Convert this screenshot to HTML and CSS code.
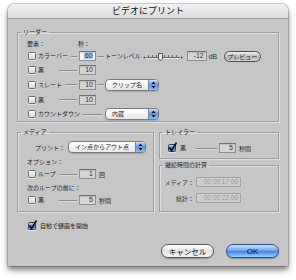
FILE: index.html
```html
<!DOCTYPE html>
<html lang="ja">
<head>
<meta charset="utf-8">
<title>ビデオにプリント</title>
<link rel="stylesheet" href="styles.css">
</head>
<body>
<div class="win">
  <div class="titlebar">ビデオにプリント</div>
  <div class="body">
    <fieldset class="grp leader">
      <legend>リーダー</legend>
      <div class="gb gb-leader">
        <div class="hdr"><span class="h1">要素：</span><span>秒：</span></div>
        <div class="row">
          <div class="lead"><span class="cb"></span><span class="lbl">カラーバー</span><span class="ln"></span></div>
          <span class="fld fld-sel"><span class="hl">60</span></span>
          <span class="ln conn"></span>
          <span class="lbl">トーンレベル</span>
          <svg class="slider" width="42" height="10" viewBox="0 0 42 10">
            <path d="M3 5.5 L1 6.5 L3 7.5 Z" fill="#333"/>
            <path d="M39 5.5 L41 6.5 L39 7.5 Z" fill="#333"/>
            <rect x="4" y="6" width="34" height="1" fill="#6a6a6a"/>
            <rect x="4" y="7" width="34" height="1" fill="#e6e6e6"/>
            <g fill="#6a6a6a">
              <rect x="6" y="4" width="1" height="2"/><rect x="10" y="4" width="1" height="2"/><rect x="14" y="4" width="1" height="2"/>
              <rect x="22" y="4" width="1" height="2"/><rect x="26" y="4" width="1" height="2"/><rect x="30" y="4" width="1" height="2"/><rect x="34" y="4" width="1" height="2"/>
            </g>
            <path d="M16.5 2.5 H20.5 V8 L18.5 9.5 L16.5 8 Z" fill="#eaeaea" stroke="#555" stroke-width="1"/>
          </svg>
          <span class="fld fld-db">-12</span>
          <span class="unit-db">dB</span>
          <span class="pill prev">プレビュー</span>
        </div>
        <div class="row">
          <div class="lead"><span class="cb"></span><span class="lbl">黒</span><span class="ln short"></span></div>
          <span class="fld">10</span>
        </div>
        <div class="row row-t">
          <div class="lead"><span class="cb"></span><span class="lbl">スレート</span><span class="ln"></span></div>
          <span class="fld">10</span>
          <span class="ln conn"></span>
          <span class="popup pop-s"><span class="ptxt">クリップ名</span><span class="arr"><svg width="9" height="10" viewBox="0 0 9 10"><path d="M2.5 4 L4.5 1.5 L6.5 4 Z M2.5 6 L4.5 8.5 L6.5 6 Z" fill="#111"/></svg></span></span>
        </div>
        <div class="row row-t">
          <div class="lead"><span class="cb"></span><span class="lbl">黒</span><span class="ln short"></span></div>
          <span class="fld">10</span>
        </div>
        <div class="row">
          <div class="lead lead-wide"><span class="cb"></span><span class="lbl">カウントダウン</span><span class="ln"></span></div>
          <span class="popup pop-s"><span class="ptxt">内蔵</span><span class="arr"><svg width="9" height="10" viewBox="0 0 9 10"><path d="M2.5 4 L4.5 1.5 L6.5 4 Z M2.5 6 L4.5 8.5 L6.5 6 Z" fill="#111"/></svg></span></span>
        </div>
      </div>
    </fieldset>

    <div class="lower">
      <fieldset class="grp media">
        <legend>メディア</legend>
        <div class="gb gb-media">
          <div class="prow">
            <span class="plbl">プリント：</span>
            <span class="popup pop-m"><span class="ptxt">イン点からアウト点</span><span class="arr"><svg width="9" height="10" viewBox="0 0 9 10"><path d="M2.5 4 L4.5 1.5 L6.5 4 Z M2.5 6 L4.5 8.5 L6.5 6 Z" fill="#111"/></svg></span></span>
          </div>
          <div class="sub sub-opt">オプション：</div>
          <div class="row">
            <div class="lead"><span class="cb"></span><span class="lbl">ループ</span><span class="ln short"></span></div>
            <span class="fld">1</span>
            <span class="unit">回</span>
          </div>
          <div class="sub sub-next">次のループの前に：</div>
          <div class="row">
            <div class="lead"><span class="cb"></span><span class="lbl">黒</span><span class="ln short"></span></div>
            <span class="fld">5</span>
            <span class="unit">秒間</span>
          </div>
        </div>
      </fieldset>

      <div class="rcol">
        <fieldset class="grp trailer">
          <legend>トレイラー</legend>
          <div class="gb gb-trailer">
            <div class="row">
              <div class="lead lead-tr"><span class="cb on"><svg width="8" height="8" viewBox="0 0 8 8"><path d="M1.5 3.5 L3.5 6.5 L8.5 -1.5" fill="none" stroke="#111" stroke-width="1.6"/></svg></span><span class="lbl">黒</span><span class="ln"></span></div>
              <span class="fld">5</span>
              <span class="unit">秒間</span>
            </div>
          </div>
        </fieldset>
        <fieldset class="grp duration">
          <legend>継続時間の計算</legend>
          <div class="gb gb-dur">
            <div class="drow"><span class="dlbl">メディア：</span><span class="tfld">00:00:17:00</span></div>
            <div class="drow"><span class="dlbl">総計：</span><span class="tfld">00:00:22:00</span></div>
          </div>
        </fieldset>
      </div>
    </div>

    <div class="auto">
      <span class="cb on"><svg width="8" height="8" viewBox="0 0 8 8"><path d="M1.5 3.5 L3.5 6.5 L8.5 -1.5" fill="none" stroke="#111" stroke-width="1.6"/></svg></span>
      <span class="lbl">自動で録画を開始</span>
    </div>

    <div class="btns">
      <span class="btn cancel">キャンセル</span>
      <span class="btn ok">OK</span>
    </div>
  </div>
</div>
</body>
</html>
```

FILE: styles.css
```css
* { box-sizing: border-box; }
html, body { margin: 0; padding: 0; background: #ffffff; }
body {
  width: 296px; height: 280px; overflow: hidden;
  font-family: "Noto Sans CJK JP", "Noto Sans", sans-serif;
  font-size: 6px; color: #1c1c1c;
}
.win {
  margin: 4px 0 0 8px;
  width: 280px; height: 262px;
  background: #c6c6c6;
  border-radius: 6px 6px 0 0;
  box-shadow: 0 0 0 1px rgba(0,0,0,0.18), 0 4px 6px rgba(0,0,0,0.5);
  display: flex; flex-direction: column;
}
.titlebar {
  flex: none; height: 15px;
  border-radius: 6px 6px 0 0;
  background: linear-gradient(#f2f2f2, #dadada);
  border-bottom: 1px solid #9c9c9c;
  font-size: 9px; line-height: 14px; text-align: center; color: #111;
}
.body { flex: 1; padding: 9px 9px 0 9px; display: flex; flex-direction: column; }

fieldset.grp {
  margin: 0; padding: 0; min-width: 0;
  border: 1px solid #9e9e9e;
  box-shadow: inset 1px 1px 0 #dedede, 1px 1px 0 #dedede;
}
legend { padding: 0 2px; margin-left: 3px; font-size: 6px; line-height: 8px; color: #1c1c1c; }
.gb { display: flex; flex-direction: column; }
.gb-leader { padding: 3px 8px 0 10px; }

.hdr { height: 10px; line-height: 10px; display: flex; }
.h1 { width: 51px; margin-left: -1px; }

.row { height: 14px; display: flex; align-items: center; flex: none; }
.row-t { height: 15px; }
.lead { width: 51px; flex: none; display: flex; align-items: center; }
.lead-wide { width: 77px; }
.lead-tr { width: 51px; }
.lbl { white-space: nowrap; line-height: 8px; }
.cb {
  flex: none; width: 8px; height: 8px; margin-right: 2px;
  border: 1px solid #6c6c6c; border-radius: 1.5px;
  background: linear-gradient(#fdfdfd, #d4d4d4);
  box-shadow: 0 1px 0 rgba(255,255,255,0.5);
  display: flex;
}
.cb svg { overflow: visible; display: block; margin: -1px 0 0 -1px; }
.cb.on {
  border-color: #2c3f6a;
  background: linear-gradient(#b8d6f8, #3f7fd8 55%, #6aa6ec);
}
.ln { flex: 1; height: 1px; background: #8a8a8a; margin: 0 2px 0 3px; box-shadow: 0 1px 0 rgba(255,255,255,0.35); }
.ln.short { flex: none; width: 18px; margin-left: auto; margin-right: 2px; }
.conn { flex: none; width: 7px; margin: 0 1px; }

.fld {
  flex: none; width: 17px; height: 10px;
  border: 1px solid #8e8e8e; border-top-color: #6c6c6c;
  background: #d4d4d4;
  font-family: "Liberation Sans", Arial, sans-serif; font-size: 7px; line-height: 8px;
  text-align: right; padding-right: 2px; color: #333;
  box-shadow: inset 0 1px 0 rgba(0,0,0,0.1);
}
.fld-sel { background: #f4f4f4; }
.hl { background: #a9c6ee; color: #2a2a2a; padding: 0 0.5px; }
.fld-db { width: 20px; margin-left: 3px; }
.unit-db { font-family: "Liberation Sans", Arial, sans-serif; font-size: 7px; width: 10px; margin-left: 2px; color: #333; }
.unit { margin-left: 3px; white-space: nowrap; }
.slider { flex: none; margin-left: 1px; display: block; }

.pill {
  flex: none; display: flex; align-items: center; justify-content: center;
  border: 1px solid #4a4a4a; border-radius: 6px;
  background: linear-gradient(#f0f0f0, #b4b4b4 60%, #d8d8d8);
  color: #1c1c1c; white-space: nowrap;
}
.prev { width: 37px; height: 11px; margin-left: 5px; font-size: 6px; }

.popup {
  flex: none; display: flex; height: 12px;
  border: 1px solid #7a7a7a; border-radius: 4px;
  background: linear-gradient(#ffffff, #e6e6e6);
  box-shadow: 0 1px 1px rgba(0,0,0,0.15);
  overflow: hidden;
}
.ptxt { flex: 1; padding-left: 6px; line-height: 10px; white-space: nowrap; color: #1c1c1c; }
.arr {
  flex: none; width: 10px; display: flex; align-items: center; justify-content: center;
  background: linear-gradient(#cfe2fb, #5b95e2 50%, #8cbcf2);
  border-left: 1px solid #6d86ad;
}
.arr svg { display: block; }
.pop-s { width: 54px; }
.pop-m { width: 78px; }

.lower { display: flex; margin-top: 6px; gap: 5px; }
.media { width: 137px; flex: none; }
.gb-media { padding: 0 6px 4px 10px; }
.prow { height: 12px; margin-top: 5px; display: flex; align-items: center; }
.plbl { width: 33px; margin-left: 7px; flex: none; white-space: nowrap; }
.sub { height: 10px; line-height: 10px; margin-left: -1px; }
.sub-opt { margin-top: 4px; }
.sub-next { margin-top: 2px; }

.rcol { flex: 1; display: flex; flex-direction: column; gap: 2px; }
.gb-trailer { padding: 5px 6px 3px 8px; }
.lead-tr .cb { margin-right: 4px; }
.lead-tr .ln { margin-left: 10px; }
.duration { flex: 1; }
.gb-dur { padding: 7px 6px 0 0; gap: 4px; }
.drow { height: 12px; display: flex; align-items: center; }
.dlbl { width: 34px; text-align: right; white-space: nowrap; color: #333; }
.tfld {
  width: 45px; height: 10px; margin-left: 2px;
  border: 1px solid #a2a2a2; background: #cecece;
  font-family: "Liberation Sans", Arial, sans-serif; font-size: 6.5px; line-height: 8px;
  text-align: right; padding-right: 2px; color: #9a9a9a;
}

.auto { display: flex; align-items: center; height: 10px; margin-top: 9px; padding-left: 11px; }
.auto .cb { margin-right: 4px; }

.btns { display: flex; justify-content: flex-end; gap: 12px; margin-top: 13px; }
.btn {
  width: 53px; height: 14px; border-radius: 7px;
  display: flex; align-items: center; justify-content: center;
  font-size: 7.5px; color: #111;
}
.cancel {
  border: 1px solid #5a5a5a;
  background: linear-gradient(#ffffff, #e2e2e2 50%, #f4f4f4);
  box-shadow: 0 1px 1px rgba(0,0,0,0.25);
}
.ok {
  border: 1px solid #2c4f8c;
  background: linear-gradient(#cfe4fd, #6aa8ef 45%, #3f86e6 55%, #9ed0fa);
  box-shadow: 0 1px 1px rgba(0,0,0,0.3);
  font-family: "Liberation Sans", Arial, sans-serif; font-size: 8px;
}
```
